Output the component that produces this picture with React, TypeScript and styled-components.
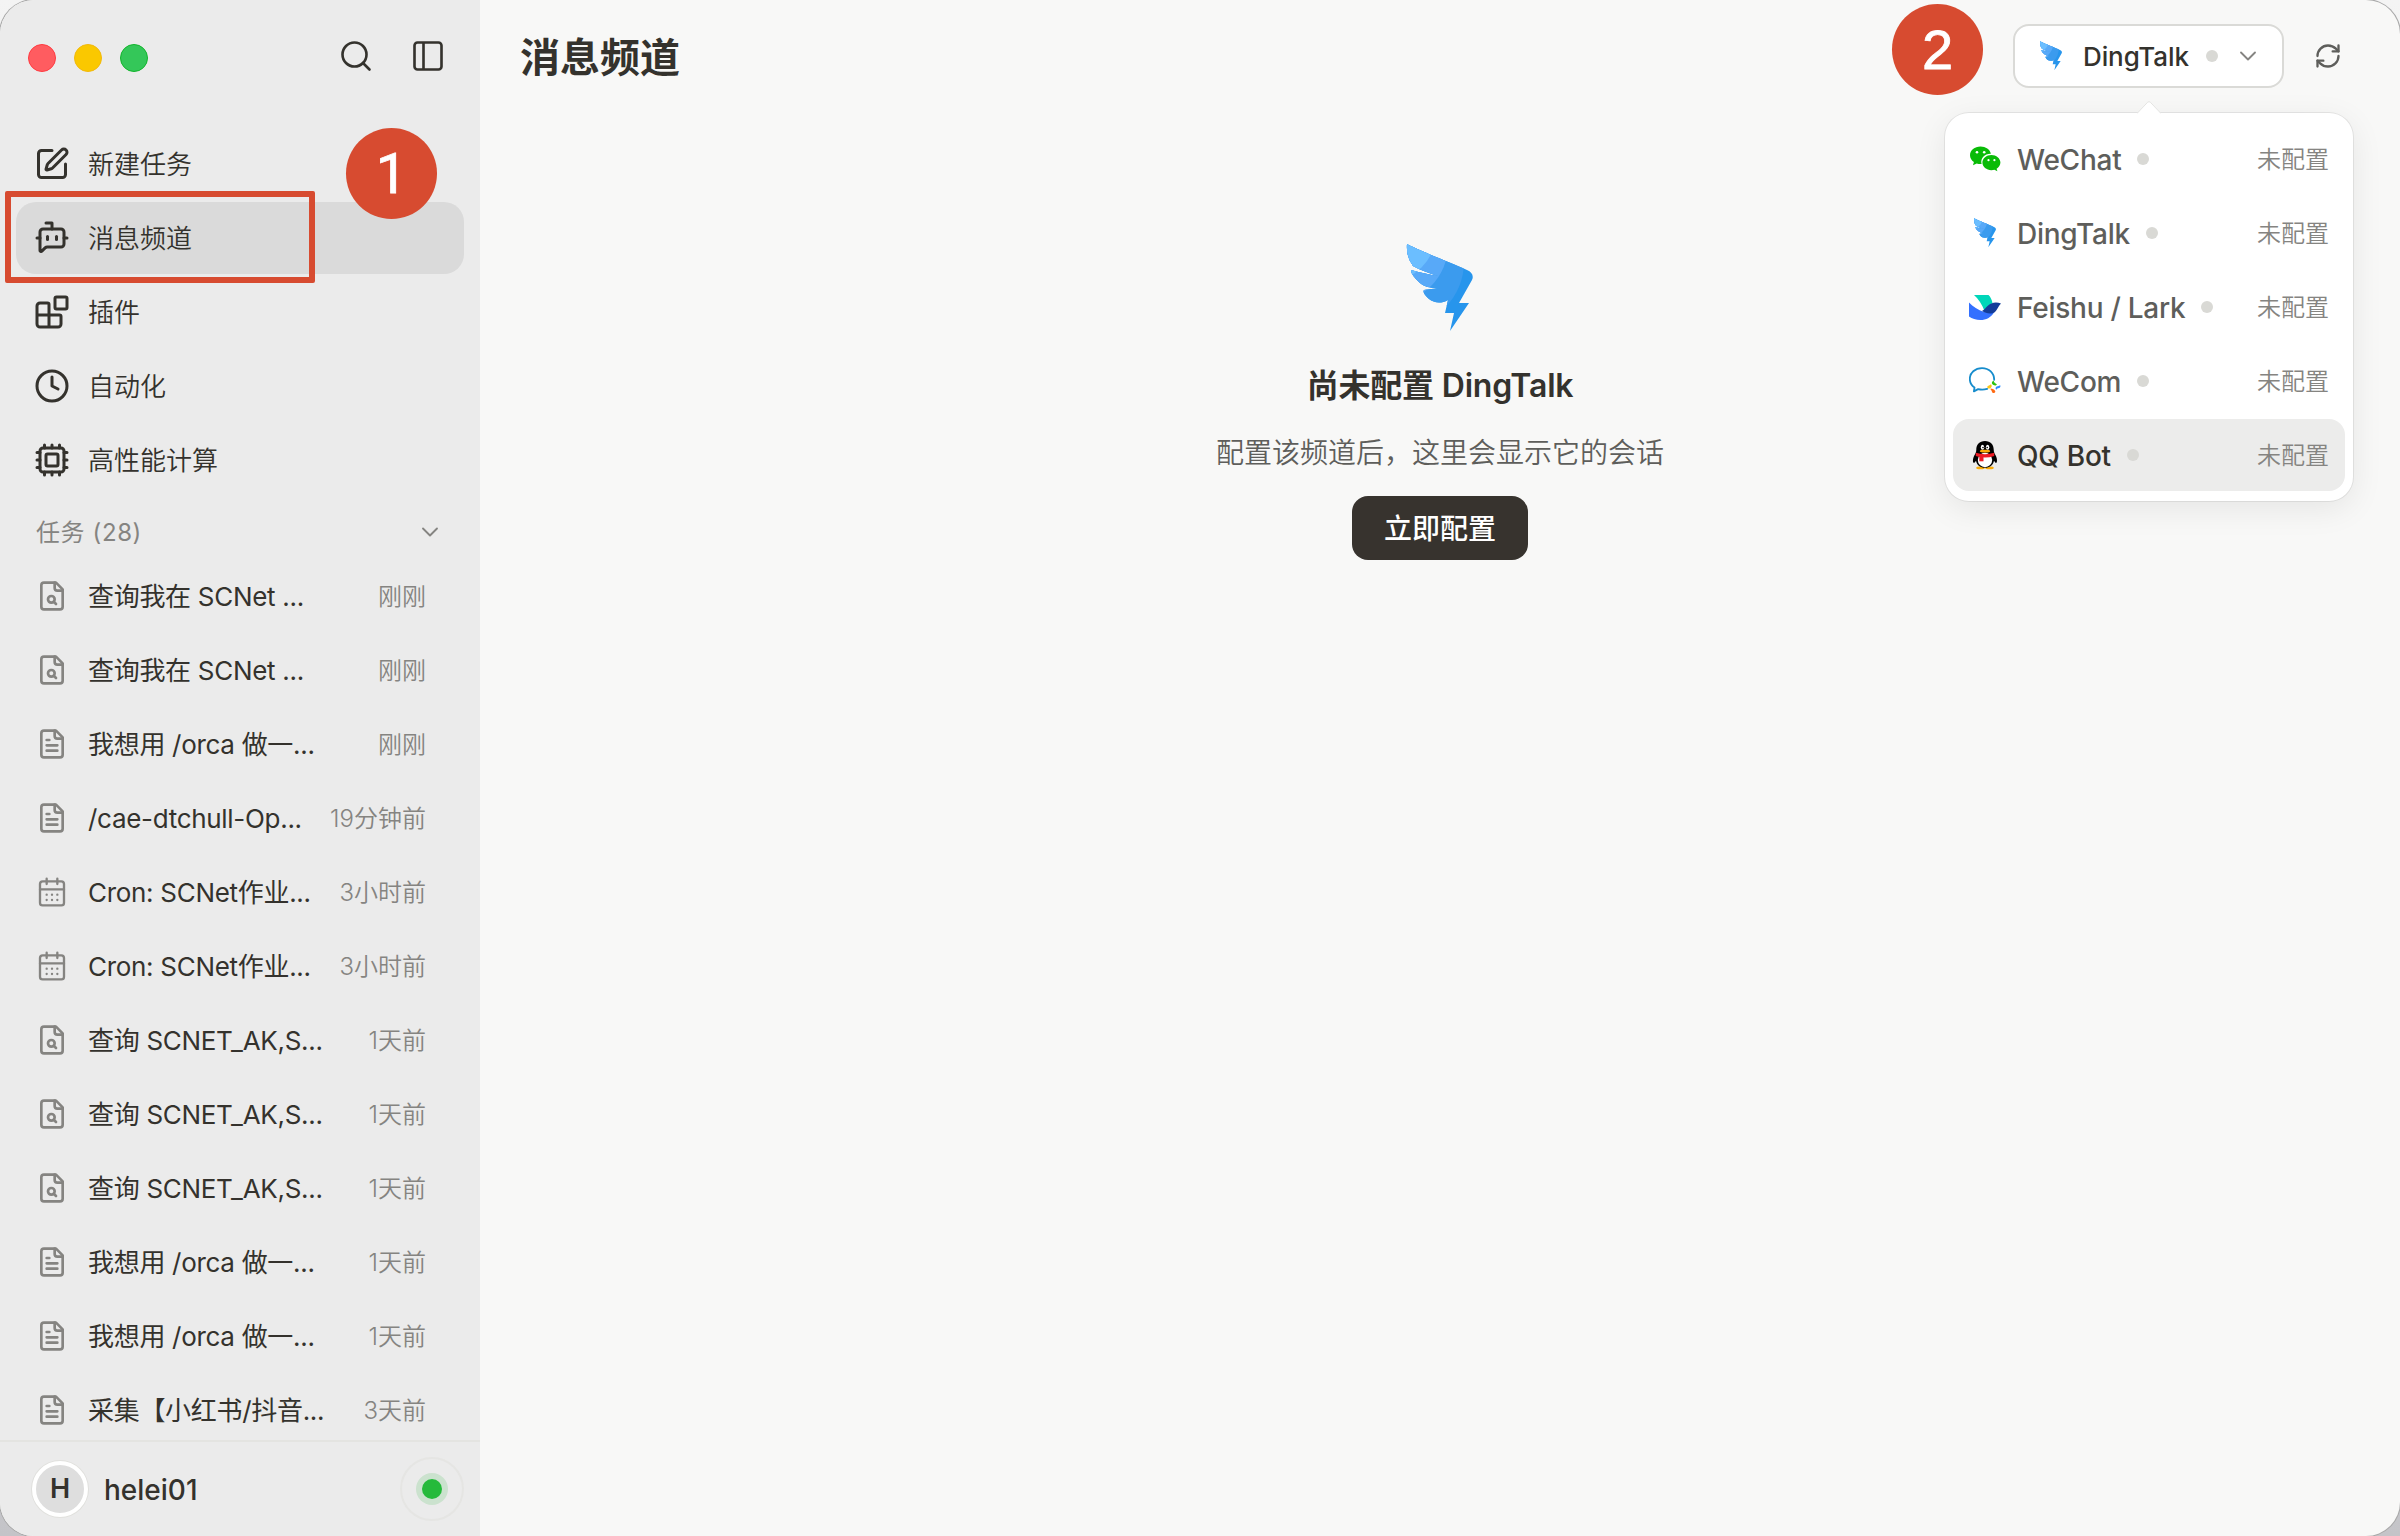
import React, { useState } from 'react';
import styled, { createGlobalStyle } from 'styled-components';
import {
  SquarePen,
  BotMessageSquare,
  Blocks,
  Clock,
  Search,
  ChevronDown,
  RefreshCw,
} from 'lucide-react';

const navList = [
  { label: '新建任务', icon: 'new' },
  { label: '消息频道', icon: 'channel' },
  { label: '插件', icon: 'plugin' },
  { label: '自动化', icon: 'auto' },
  { label: '高性能计算', icon: 'hpc' },
];

const taskList = [
  { icon: 'search', title: '查询我在 SCNet ...', time: '刚刚' },
  { icon: 'search', title: '查询我在 SCNet ...', time: '刚刚' },
  { icon: 'text', title: '我想用 /orca 做一...', time: '刚刚' },
  { icon: 'text', title: '/cae-dtchull-Op...', time: '19分钟前' },
  { icon: 'cron', title: 'Cron: SCNet作业...', time: '3小时前' },
  { icon: 'cron', title: 'Cron: SCNet作业...', time: '3小时前' },
  { icon: 'search', title: '查询 SCNET_AK,S...', time: '1天前' },
  { icon: 'search', title: '查询 SCNET_AK,S...', time: '1天前' },
  { icon: 'search', title: '查询 SCNET_AK,S...', time: '1天前' },
  { icon: 'text', title: '我想用 /orca 做一...', time: '1天前' },
  { icon: 'text', title: '我想用 /orca 做一...', time: '1天前' },
  { icon: 'text', title: '采集【小红书/抖音...', time: '3天前' },
];

const channelList = ['WeChat', 'DingTalk', 'Feishu / Lark', 'WeCom', 'QQ Bot'];

function NavIcon({ name }: { name: string }) {
  if (name === 'new') return <SquarePen size={36} strokeWidth={2} />;
  if (name === 'channel') return <BotMessageSquare size={36} strokeWidth={2} />;
  if (name === 'plugin') return <Blocks size={36} strokeWidth={2} />;
  if (name === 'auto') return <Clock size={36} strokeWidth={2} />;
  return (
    <svg width="36" height="36" viewBox="0 0 24 24" fill="none" stroke="currentColor" strokeWidth="2" strokeLinecap="round" strokeLinejoin="round">
      <rect x="4" y="4" width="16" height="16" rx="2" />
      <rect x="8" y="8" width="8" height="8" rx="1" />
      <path d="M7 2v2M12 2v2M17 2v2M7 20v2M12 20v2M17 20v2M2 7h2M2 12h2M2 17h2M20 7h2M20 12h2M20 17h2" />
    </svg>
  );
}

function TaskIcon({ name }: { name: string }) {
  if (name === 'cron') {
    return (
      <svg width="32" height="32" viewBox="0 0 24 24" fill="none" stroke="currentColor" strokeWidth="1.75" strokeLinecap="round" strokeLinejoin="round">
        <rect x="3" y="4" width="18" height="18" rx="2" />
        <path d="M8 2v4M16 2v4M3 10h18M8 14h.01M12 14h.01M16 14h.01M8 18h.01M12 18h.01M16 18h.01" />
      </svg>
    );
  }
  return (
    <svg width="32" height="32" viewBox="0 0 24 24" fill="none" stroke="currentColor" strokeWidth="2" strokeLinecap="round" strokeLinejoin="round">
      <path d="M15 2H6a2 2 0 0 0-2 2v16a2 2 0 0 0 2 2h12a2 2 0 0 0 2-2V7Z" />
      <path d="M14 2v4a2 2 0 0 0 2 2h4" />
      {name === 'search' ? (
        <>
          <circle cx="11.5" cy="14.500" r="2.500" />
          <path d="M13.300 16.300 15 18" />
        </>
      ) : (
        <path d="M10 9H8M16 13H8M16 17H8" />
      )}
    </svg>
  );
}

// 钉钉
function DingTalkLogo({ size }: { size: number }) {
  const id = 'ding' + size;
  return (
    <svg width={size} height={size} viewBox="0 0 96 96">
      <clipPath id={id}>
        <path d="M15 4C30 12 60 23 75 30C80 32 82 36 80 40L67 63H77L58 91L62 73H53L56 60C49 64 42 63 37 59Q30 53 32 50Q38 49 49 48Q34 49 28 43Q19 35 19 30Q34 34 46 36Q30 31 21 26Q14 17 15 4Z" />
      </clipPath>
      <g clipPath={`url(#${id})`}>
        <rect width="96" height="96" fill="#2795ec" />
        <circle cx="8" cy="22" r="64" fill="#3b9bee" />
        <circle cx="-2" cy="5" r="58" fill="#58a9f8" />
        <circle cx="-8" cy="-10" r="53" fill="#6bbeff" />
      </g>
    </svg>
  );
}

function ChannelLogo({ name }: { name: string }) {
  if (name === 'WeChat') {
    return (
      <svg width="32" height="32" viewBox="0 0 32 32">
        <path d="M11.5 3.5C5.7 3.5 1 7.4 1 12.3c0 2.8 1.5 5.2 3.9 6.8L4 22.3l3.7-1.9c1.6.5 3.2.8 4.9.6-1.6-6 3.5-10.6 9.3-10.3C21 6.500 16.700 3.500 11.500 3.500Z" fill="#09bb07" />
        <path d="M31.400 19.600c0-4.200-4.100-7.600-9-7.600s-9 3.400-9 7.600 4.100 7.600 9 7.600c1.100 0 2.100-.2 3.100-.4l2.900 1.500-.8-2.600c2.300-1.400 3.800-3.600 3.800-6.100Z" fill="#09bb07" />
        <g fill="#fff">
          <circle cx="8" cy="9.300" r="1.300" />
          <circle cx="15.200" cy="9.300" r="1.300" />
          <circle cx="19.500" cy="17.200" r="1.100" />
          <circle cx="25.400" cy="17.200" r="1.100" />
        </g>
      </svg>
    );
  }
  if (name === 'DingTalk') return <DingTalkLogo size={32} />;
  if (name === 'Feishu / Lark') {
    return (
      <svg width="32" height="32" viewBox="0 0 32 32">
        <path d="M5 4h14.500c2 2 3.300 4.500 4 8l-8 8C13 13.500 9.500 8 5 4Z" fill="#00d6b9" />
        <path d="M0 11.500c4 4 9 7.500 15 9.500l10 .500c-3 5-8 7.500-13.500 7.500-4.500 0-8.500-1.500-11.500-3.500Z" fill="#3370ff" />
        <path d="M32 12.500c-5-2-10-1-13.500 2.500-1.700 1.700-3.400 3.800-5.500 5 4 2.500 9.500 3.600 13 1 2-2 3.500-6 6-8.500Z" fill="#133c9a" />
      </svg>
    );
  }
  if (name === 'WeCom') {
    return (
      <svg width="32" height="32" viewBox="0 0 32 32">
        <path d="M25.200 14.800C25.200 8 20 3.100 13 3.100 6 3.100.800 7.900.800 13.900c0 3.600 1.700 6.600 4.700 8.600L4.900 26.400l4.200-2.300c3.200.8 6.300.6 9.100-.2" fill="none" stroke="#168ccc" strokeWidth="1.800" strokeLinecap="round" strokeLinejoin="round" />
        <path d="M24.600 15.600c.3 2 1.400 3 3.300 3.700-.7 1.700-3 1.700-4.600-.2-1-.9-.2-2.700 1.300-3.500Z" fill="#2bc10f" />
        <path d="M31.300 20.200c.6 2-.8 3.200-2.600 3l-1.500 1.500c-1-1.200-.8-2.300.4-3.100 1.400-.4 2.500-.8 3.700-1.400Z" fill="#2d8cff" />
        <path d="M21.500 23.600c2.200 0 3.900.9 4.800 2.700.2 1.800-2.800 2.800-3.400.3-.2-1.200-1.500-1.600-1.400-3Z" fill="#ff6a13" />
        <path d="M18.200 21.800c.9-1.700 2.500-.8 3.700-2.500 1.500 1.200.8 3.800-1.300 4.200-1.300.2-2.400-.2-2.400-1.700Z" fill="#fbc515" />
      </svg>
    );
  }
  return (
    <svg width="32" height="32" viewBox="0 0 32 32">
      <ellipse cx="11.500" cy="28.900" rx="4.300" ry="1.300" fill="#faab07" />
      <ellipse cx="20.500" cy="28.900" rx="4.300" ry="1.300" fill="#faab07" />
      <path d="M16 2c-5.600 0-8.800 4-8.700 8.600 0 3-1 4.200-2 6C4 19 3.400 23 4.600 23.800c.8.500 1.700-1 2.400-2 .8 4.500 4.500 7 9 7s8.200-2.500 9-7c.7 1 1.600 2.500 2.400 2C28.600 23 28 19 26.700 16.600c-1-1.800-2-3-2-6C24.800 6 21.600 2 16 2Z" fill="#000" />
      <ellipse cx="16" cy="21" rx="7.200" ry="7.200" fill="#fff" />
      <path d="M6.800 13.800c6 1.800 12.400 1.800 18.400 0v3.300c-6 2-12.400 2-18.400 0Z" fill="#ec1c24" />
      <path d="M10.300 17.500h4.200v4.800h-4.200Z" fill="#ec1c24" />
      <ellipse cx="13.500" cy="8.200" rx="1.700" ry="2.500" fill="#fff" />
      <ellipse cx="18.600" cy="8.200" rx="1.700" ry="2.500" fill="#fff" />
      <circle cx="14" cy="8.500" r=".8" />
      <circle cx="18.200" cy="8.500" r=".8" />
      <ellipse cx="16" cy="12.200" rx="5.200" ry="1.400" fill="#faab07" />
    </svg>
  );
}

function App() {
  const [nav, setNav] = useState(1);
  const [channel, setChannel] = useState('DingTalk');
  const [hovered, setHovered] = useState('QQ Bot');

  return (
    <Desktop>
      <GlobalStyle />
      <Window>
        <Sidebar>
          <TitleBar>
            <Light color="#ff5c60" $edge="#ff3b41" />
            <Light color="#fac800" $edge="#f2b90c" />
            <Light color="#34c759" $edge="#12b52c" />
            <TitleActions>
              <Search size={36} strokeWidth={1.75} />
              <svg width="36" height="36" viewBox="0 0 24 24" fill="none" stroke="currentColor" strokeWidth="1.75">
                <rect x="3" y="3" width="18" height="18" rx="2" />
                <path d="M9 3v18" />
              </svg>
            </TitleActions>
          </TitleBar>
          <Nav>
            {navList.map((a, i) => {
              return (
                <NavItem key={a.label} $active={nav === i} onClick={() => setNav(i)}>
                  <NavIcon name={a.icon} />
                  {a.label}
                </NavItem>
              );
            })}
          </Nav>
          <TaskHeader>
            <span>任务 (28)</span>
            <ChevronDown size={28} strokeWidth={1.6} />
          </TaskHeader>
          <TaskList>
            {taskList.map((a, i) => {
              return (
                <TaskItem key={i}>
                  <TaskIcon name={a.icon} />
                  <TaskTitle>{a.title}</TaskTitle>
                  <TaskTime>{a.time}</TaskTime>
                </TaskItem>
              );
            })}
          </TaskList>
          <UserBar>
            <Avatar>H</Avatar>
            <UserName>helei01</UserName>
            <Online>
              <OnlineDot />
            </Online>
          </UserBar>
        </Sidebar>

        <Main>
          <Header>
            <h1>消息频道</h1>
            <Picker>
              <PickerButton>
                <DingTalkLogo size={32} />
                <span>{channel}</span>
                <Dot />
                <ChevronDown size={28} strokeWidth={1.6} />
              </PickerButton>
              <Menu>
                <Arrow width="24" height="14" viewBox="0 0 24 14">
                  <path d="M0 13.500 10.600 2.300q1.400-1.400 2.800 0L24 13.500" fill="#fff" stroke="#e4e4e2" />
                  <path d="M1 13h22v1H1Z" fill="#fff" />
                </Arrow>
                {channelList.map((a) => {
                  return (
                    <MenuItem key={a} $hovered={hovered === a} onMouseEnter={() => setHovered(a)} onClick={() => setChannel(a)}>
                      <ChannelLogo name={a} />
                      <span>{a}</span>
                      <Dot />
                      <MenuState>未配置</MenuState>
                    </MenuItem>
                  );
                })}
              </Menu>
            </Picker>
            <Refresh>
              <RefreshCw size={28} strokeWidth={2} />
            </Refresh>
          </Header>
          <Empty>
            <DingTalkLogo size={96} />
            <h2>尚未配置 DingTalk</h2>
            <p>配置该频道后，这里会显示它的会话</p>
            <button>立即配置</button>
          </Empty>
        </Main>
      </Window>

      <Highlight />
      <Step $x={346} $y={128} $font="Roboto">1</Step>
      <Step $x={1892} $y={4} $font="Liberation Sans">2</Step>
    </Desktop>
  );
}

export default App;

const GlobalStyle = createGlobalStyle`
  * {
    box-sizing: border-box;
  }
  body {
    margin: 0;
    overflow: hidden;
    font-family: Inter, "Noto Sans CJK SC", sans-serif;
    line-height: 1.5;
    color: #34322d;
  }
  svg {
    display: block;
    flex-shrink: 0;
  }
`

const Desktop = styled.div`
  position: relative;
  width: 2400px;
  height: 1536px;
  background: linear-gradient(#f4f4f4, #c4c4c8);
`

const Window = styled.div`
  display: flex;
  width: 100%;
  height: 100%;
  border-radius: 34px;
  overflow: hidden;
  background: #f8f8f7;
  box-shadow: 0 0 0 1px #a8a8a8;
`

const Sidebar = styled.aside`
  display: flex;
  flex-direction: column;
  width: 480px;
  flex-shrink: 0;
  background: #ebebeb;
`

const TitleBar = styled.div`
  display: flex;
  align-items: center;
  gap: 18px;
  height: 116px;
  flex-shrink: 0;
  padding: 0 34px 0 28px;
`

const Light = styled.i<{ color: string; $edge: string }>`
  width: 28px;
  height: 28px;
  border-radius: 50%;
  background: ${(props) => props.color};
  border: 1px solid ${(props) => props.$edge};
`

const TitleActions = styled.div`
  display: flex;
  gap: 36px;
  margin-left: auto;
  padding-bottom: 4px;
`

const Nav = styled.nav`
  display: flex;
  flex-direction: column;
  gap: 2px;
  padding: 12px 16px 0;
`

const NavItem = styled.div<{ $active: boolean }>`
  display: flex;
  align-items: center;
  gap: 18px;
  height: 72px;
  padding: 0 18px;
  border-radius: 20px;
  font-size: 26px;
  font-weight: 350;
  background: ${(props) => (props.$active ? '#dadada' : 'transparent')};
`

const TaskHeader = styled.div`
  display: flex;
  align-items: center;
  justify-content: space-between;
  height: 64px;
  flex-shrink: 0;
  padding: 0 36px;
  margin-top: 4px;
  margin-bottom: -4px;
  font-size: 24px;
  letter-spacing: 0.6px;
  color: #858481;
  span {
    padding-top: 2px;
  }
`

const TaskList = styled.div`
  display: flex;
  flex-direction: column;
  flex: 1;
  gap: 2px;
  min-height: 0;
  overflow: hidden;
  padding: 0 16px;
`

const TaskItem = styled.div`
  display: flex;
  align-items: center;
  height: 72px;
  flex-shrink: 0;
  padding: 0 38px 0 20px;
  color: #858481;
`

const TaskTitle = styled.span`
  flex: 1;
  margin-left: 20px;
  font-size: 26px;
  letter-spacing: -0.3px;
  white-space: nowrap;
  color: #34322d;
`

const TaskTime = styled.span`
  padding-top: 2px;
  font-size: 24px;
  font-weight: 350;
  white-space: nowrap;
`

const UserBar = styled.div`
  display: flex;
  align-items: center;
  height: 96px;
  flex-shrink: 0;
  padding: 0 16px 0 32px;
  border-top: 2px solid #e4e4e1;
`

const Avatar = styled.div`
  display: flex;
  align-items: center;
  justify-content: center;
  width: 56px;
  height: 56px;
  padding-top: 1px;
  border: 4px solid #fff;
  border-radius: 50%;
  box-shadow: 0 0 0 1px #e0e0dd;
  background: #dedede;
  font-size: 27px;
  font-weight: 600;
`

const UserName = styled.span`
  flex: 1;
  margin-left: 16px;
  padding-top: 2px;
  font-size: 28px;
  font-weight: 500;
`

const Online = styled.div`
  display: flex;
  align-items: center;
  justify-content: center;
  width: 64px;
  height: 64px;
  border: 2px solid #e5e5e3;
  border-radius: 50%;
`

const OnlineDot = styled.i`
  width: 20px;
  height: 20px;
  border-radius: 50%;
  background: #25ba3b;
  box-shadow: 0 0 0 6px #cbe2ce;
`

const Main = styled.main`
  display: flex;
  flex-direction: column;
  flex: 1;
`

const Header = styled.header`
  display: flex;
  align-items: center;
  height: 112px;
  padding: 0 46px 0 40px;
  h1 {
    flex: 1;
    margin: 0;
    padding-top: 3px;
    font-size: 40px;
    font-weight: 600;
  }
`

const Picker = styled.div`
  position: relative;
`

const PickerButton = styled.div`
  display: flex;
  align-items: center;
  width: 271px;
  height: 64px;
  padding: 0 20px;
  border: 2px solid #dadad7;
  border-radius: 16px;
  background: #fff;
  color: #858481;
  span {
    margin: 0 17px 0 16px;
    font-size: 26px;
    font-weight: 500;
    letter-spacing: -0.1px;
    color: #34322d;
  }
  > svg:last-child {
    margin-left: auto;
  }
`

const Dot = styled.i`
  width: 12px;
  height: 12px;
  border-radius: 50%;
  background: #d9d9d5;
`

// 下拉菜单
const Menu = styled.div`
  position: absolute;
  top: 89px;
  right: -69px;
  display: flex;
  flex-direction: column;
  gap: 2px;
  width: 408px;
  padding: 10px 8px;
  border-radius: 24px;
  background: #fff;
  box-shadow: 0 0 0 1px rgba(0, 0, 0, 0.07), 0 8px 32px rgba(0, 0, 0, 0.08);
`

const Arrow = styled.svg`
  position: absolute;
  top: -13px;
  left: 192px;
`

const MenuItem = styled.div<{ $hovered: boolean }>`
  display: flex;
  align-items: center;
  height: 72px;
  padding: 0 16px;
  border-radius: 16px;
  background: ${(props) => (props.$hovered ? '#ececeb' : 'transparent')};
  color: ${(props) => (props.$hovered ? '#34322d' : '#5e5e5b')};
  > span:nth-child(2) {
    margin: 0 16px;
    padding-top: 1px;
    font-size: 28px;
    font-weight: 500;
    letter-spacing: -0.25px;
  }
`

const MenuState = styled.span`
  margin-left: auto;
  padding-top: 2px;
  font-size: 24px;
  font-weight: 350;
  color: #858481;
`

const Refresh = styled.div`
  display: flex;
  align-items: center;
  justify-content: center;
  width: 52px;
  margin-left: 18px;
  color: #5e5e5b;
`

const Empty = styled.section`
  display: flex;
  flex-direction: column;
  align-items: center;
  padding-top: 128px;
  h2 {
    margin: 26px 0 0;
    font-size: 32px;
    font-weight: 600;
    line-height: 48px;
    letter-spacing: -0.2px;
  }
  p {
    margin: 23px 0 0;
    font-size: 28px;
    font-weight: 350;
    line-height: 40px;
    color: #5e5e5b;
  }
  button {
    width: 176px;
    height: 64px;
    margin-top: 23px;
    padding-top: 2px;
    border: none;
    border-radius: 16px;
    background: #37332e;
    color: #fff;
    font-family: inherit;
    font-size: 28px;
    font-weight: 500;
    line-height: 1.5;
  }
`

const Highlight = styled.div`
  position: absolute;
  left: 5px;
  top: 191px;
  width: 310px;
  height: 92px;
  border: 6px solid #d74b30;
  border-radius: 2px;
`

const Step = styled.div<{ $x: number; $y: number; $font: string }>`
  position: absolute;
  left: ${(props) => props.$x}px;
  top: ${(props) => props.$y}px;
  width: 91px;
  height: 91px;
  border-radius: 50%;
  background: #d74b30;
  color: #fff;
  font-family: "${(props) => props.$font}", sans-serif;
  font-size: 56px;
  line-height: 92px;
  text-align: center;
  -webkit-text-stroke: 0.8px #fff;
`
